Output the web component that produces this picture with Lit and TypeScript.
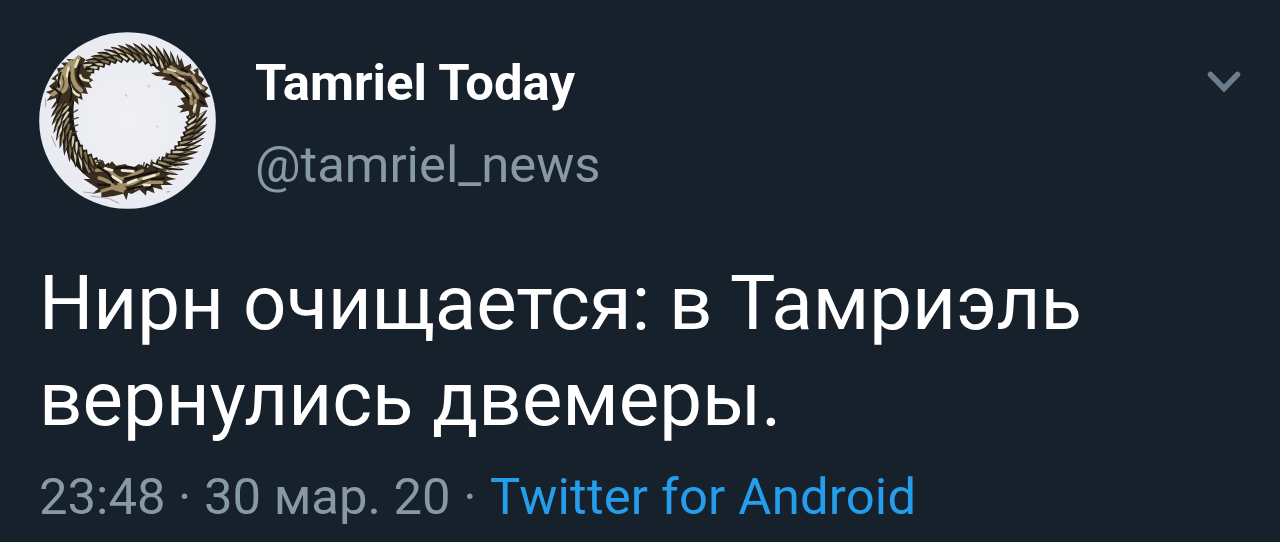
/**
 * <app-root> — a single tweet in the dark theme.
 * <ouroboros-avatar> draws the round profile picture as inline SVG.
 */
import { LitElement, html, css, svg } from "lit"
import { customElement } from "lit/decorators.js"

interface Scale {
  x: number
  y: number
  angle: number
  length: number
  tone: number
}

interface Arc {
  from: number
  to: number
  count: number
  // tilt of the spikes relative to the outward direction
  tilt: number
  size: [number, number]
}

const GOLD = ["#9c8e70", "#cfc5a8", "#796a4b", "#e2dbc6", "#85744f"]

const ARCS: Arc[] = [
  { from: -126, to: -42, count: 15, tilt: -50, size: [30, 58] },
  { from: 5, to: 80, count: 14, tilt: -42, size: [46, 64] },
  { from: 112, to: 197, count: 14, tilt: -56, size: [54, 56] },
]

function ringPoint(deg: number, offset = 0) {
  const a = (deg * Math.PI) / 180
  return {
    x: 297 + (203 + offset) * Math.cos(a),
    y: 268 + (186 + offset) * Math.sin(a),
  }
}

function scalesOf(arc: Arc): Scale[] {
  const out: Scale[] = []
  for (let i = 0; i < arc.count; i++) {
    const t = i / (arc.count - 1)
    const deg = arc.from + (arc.to - arc.from) * t
    const length = arc.size[0] + (arc.size[1] - arc.size[0]) * t
    for (const row of [-1, 0]) {
      const p = ringPoint(deg + row * 3, row * 15 - 2)
      out.push({ ...p, angle: deg + arc.tilt, length: length * (row ? 0.65 : 1), tone: (i * 3 + row + 1) % GOLD.length })
    }
  }
  return out
}

const SCALES = ARCS.flatMap(scalesOf)

@customElement("ouroboros-avatar")
export class OuroborosAvatar extends LitElement {
  static styles = css`
    :host {
      display: block;
      width: 177px;
      height: 177px;
    }
    .picture {
      display: block;
      width: 100%;
      height: 100%;
    }
  `

  private renderScale(s: Scale) {
    const l = s.length
    return svg`<g transform="translate(${s.x} ${s.y}) rotate(${s.angle})">
      <path d="M-13 -8Q${l * 0.4} -9 ${l} -3Q${l * 0.4} 11 -13 12Z" fill="#231d17" />
      <path d="M-8 -3Q${l * 0.4} -8 ${l * 0.85} -3Q${l * 0.35} 3 -6 3Z" fill=${GOLD[s.tone]} />
    </g>`
  }

  render() {
    return html`<svg class="picture" viewBox="27 21 531 531" role="img" aria-label="Tamriel Today">
      <defs>
        <clipPath id="round"><circle cx="292.5" cy="286.5" r="265" /></clipPath>
        <radialGradient id="paper">
          <stop offset="0" stop-color="#f0f0f2" />
          <stop offset="1" stop-color="#e9ebf2" />
        </radialGradient>
      </defs>
      <g clip-path="url(#round)">
        <rect x="27" y="21" width="531" height="531" fill="url(#paper)" />
        <!-- dark inner edge of the body -->
        <g fill="none" stroke="#1b1713" stroke-linecap="round">
          <path d="M162 137Q215 90 300 93Q355 96 399 142" stroke-width="9" />
          <path d="M487 260Q485 330 439 383Q400 421 336 440" stroke-width="17" />
          <path d="M122 222Q110 315 152 381Q174 412 212 430" stroke-width="22" />
          <path d="M98 235Q88 320 123 387Q153 440 209 470" stroke-width="16" />
        </g>
        ${SCALES.map((s) => this.renderScale(s))}
        <path d="M129 263L144 254M127 284L146 277M129 305L145 299M127 325L142 319M193 416L210 405L222 413M340 425L343 411M362 417L366 404M384 409L389 395M406 397L410 383" fill="none" stroke="#4b443b" stroke-width="4" />

        <!-- left head -->
        <path d="M57 184L77 167L64 162L85 143L81 130L105 126L93 113L120 112L109 101L135 104L145 91L166 103L159 120L168 137L185 146L178 157L190 166L177 173L186 189L166 187L174 207L154 204L158 225L143 218L146 239L130 225L121 249L103 228L83 246L77 219L50 228L64 209L47 201L68 194Z" fill="#3b3020" />
        <g fill="none" stroke-linecap="round">
          <path d="M123 112Q98 135 108 160Q115 183 99 199M145 99Q124 116 127 148Q129 179 153 196M107 134Q82 147 94 170Q96 190 68 208" stroke="#a8946d" stroke-width="13" />
          <path d="M116 128L111 154M144 106L136 125M120 180Q125 202 146 211M151 152Q153 166 175 167M82 158L89 174" stroke="#e8dfc6" stroke-width="8" />
          <path d="M119 142Q114 169 123 190Q127 213 120 231M150 121L143 145Q143 166 158 181M92 143Q82 165 87 186M71 188L91 206L83 232" stroke="#17130f" stroke-width="6" />
        </g>

        <!-- right head -->
        <path d="M363 144L392 140L380 126L407 132L400 116L423 125L425 106L445 121L454 98L463 126L483 116L485 138L505 128L506 151L522 161L514 176L535 188L525 200L542 214L524 220L535 247L512 245L506 278L491 267L482 280L476 257L448 263L459 251L440 244L463 238L451 220L468 215L449 196L437 183L414 179L425 169L394 163L407 155L379 153Z" fill="#3b3022" />
        <g fill="none" stroke-linecap="round">
          <path d="M403 139Q431 139 451 164L483 183L503 218M423 126L451 144L479 149M458 184L481 203L484 235M488 153L500 175L520 190M496 226L493 260" stroke="#9f8c69" stroke-width="10" />
          <path d="M413 132L436 139M447 158L461 163M483 133L493 144M469 196L480 208M497 240L491 257M504 178L513 190" stroke="#e6dfcb" stroke-width="6" />
          <path d="M421 150L443 166L465 175M456 132L471 140M476 164L499 185L504 201M463 205L476 221M509 202L523 213M511 229L522 236" stroke="#15120f" stroke-width="7" />
        </g>

        <!-- bottom head and tail -->
        <path d="M190 425L214 410L232 424L246 409L259 422L286 417L305 431L327 417L349 432L363 419L379 434L405 429L392 443L426 443L407 454L439 462L408 468L429 480L392 480L398 494L369 487L374 505L350 495L348 512L329 494L305 507L295 503L289 526L280 506L252 513L214 518L214 501L186 507L205 491L160 462L182 462L158 444L190 446Z" fill="#382d1f" />
        <g fill="none" stroke-linecap="round">
          <path d="M199 436Q232 429 251 448T292 457L337 437M207 459Q235 465 251 484L284 490M267 478Q300 485 334 461L385 447M317 490L362 471L395 472M216 498L245 489L278 498" stroke="#a18d66" stroke-width="10" />
          <path d="M225 430L246 436M276 436L310 439M247 454L274 471M294 474L319 464M340 461L374 451M341 480L359 480" stroke="#f0e9d5" stroke-width="8" />
          <path d="M204 425L235 445L249 471M257 430L295 426L321 431M285 462L337 450L382 439M204 479L239 480M295 493L337 484M365 463L402 460M348 494L368 483" stroke="#15120f" stroke-width="7" />
        </g>

        <!-- faint sketch lines on the paper -->
        <path d="M160 501L198 505M182 513L235 520L267 535M356 181L357 187M379 302L384 307M286 209L292 214M47 220L47 247M409 501L421 500M64 332L78 365" fill="none" stroke="#a3a5ab" stroke-width="3" />
      </g>
    </svg>`
  }
}

@customElement("app-root")
export class AppRoot extends LitElement {
  static styles = css`
    :host {
      display: block;
      font-family: Roboto, "Noto Sans", sans-serif;
    }
    .tweet {
      box-sizing: border-box;
      height: 542px;
      padding: 32px 39px 0;
      background: #17212b;
      overflow: hidden;
    }
    .header {
      display: flex;
      align-items: flex-start;
      height: 223px;
    }
    .names {
      flex: 1;
      display: flex;
      flex-direction: column;
      gap: 22px;
      padding: 21px 0 0 39px;
      font-size: 50.8px;
      line-height: 60px;
      white-space: nowrap;
    }
    .name {
      color: #fff;
      font-weight: 700;
    }
    .handle,
    .meta {
      color: #8899a6;
    }
    .chevron {
      width: 34px;
      height: 22px;
      margin-top: 39px;
    }
    .body {
      margin: 0;
      color: #fff;
      font-size: 76.2px;
      line-height: 96px;
      white-space: nowrap;
    }
    .meta {
      margin-top: 20px;
      font-size: 50.8px;
      line-height: 60px;
      white-space: nowrap;
    }
    .source {
      margin-left: 1px;
      letter-spacing: 0.2px;
      color: #249eec;
    }
  `

  render() {
    return html`<article class="tweet">
      <header class="header">
        <ouroboros-avatar></ouroboros-avatar>
        <div class="names">
          <span class="name">Tamriel Today</span>
          <span class="handle">@tamriel_news</span>
        </div>
        <svg class="chevron" viewBox="0 0 34 22">
          <path d="M3.5 3.5L17 17.5L30.5 3.5" fill="none" stroke="#6b7d8c" stroke-width="5.5" stroke-linecap="round" />
        </svg>
      </header>
      <p class="body">Нирн очищается: в Тамриэль<br />вернулись двемеры.</p>
      <div class="meta">23:48 · 30 мар. 20 · <span class="source">Twitter for Android</span></div>
    </article>`
  }
}
